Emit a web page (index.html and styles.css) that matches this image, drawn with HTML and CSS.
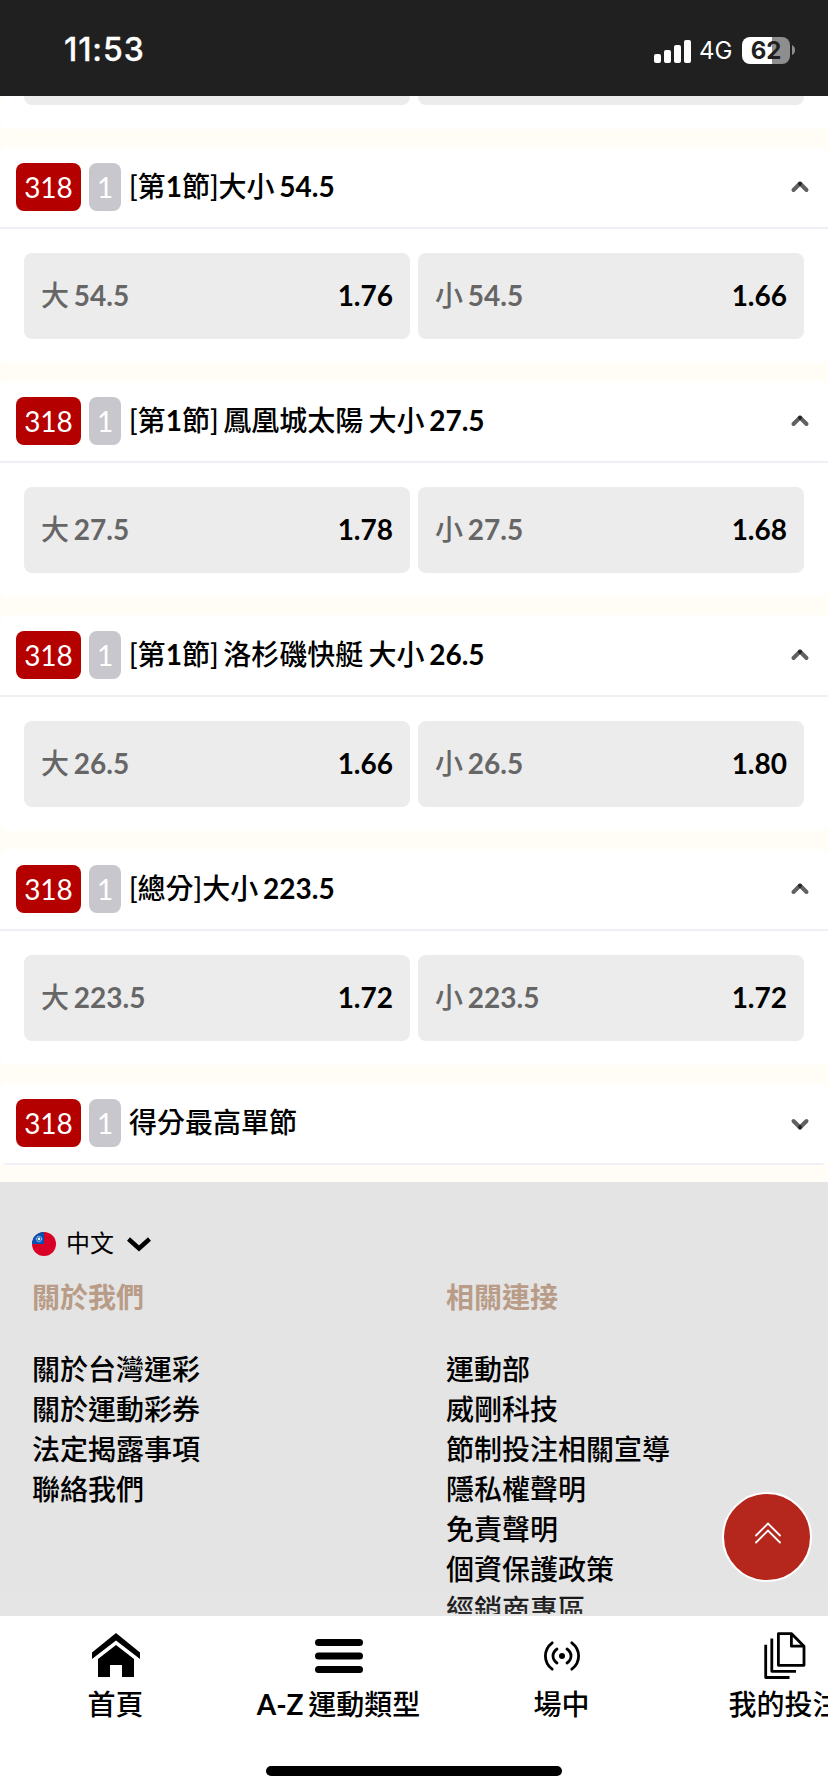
FILE: index.html
```html
<!DOCTYPE html>
<html lang="zh-Hant">
<head>
<meta charset="utf-8">
<title>台灣運彩</title>
<link rel="stylesheet" href="styles.css">
</head>
<body>
<svg class="defs" width="0" height="0">
  <symbol id="chev" viewBox="0 0 20 14">
    <g fill="none" stroke="#000" stroke-opacity=".62" stroke-width="4" stroke-linecap="round">
      <path d="M10 3.500 3.500 10"/><path d="M10 3.500 16.500 10"/>
    </g>
  </symbol>
</svg>
<div class="phone">
  <header class="status">
    <span class="time">11:53</span>
    <div class="status-right">
      <svg class="signal" width="38" height="24" viewBox="0 0 38 24" fill="#fff">
        <rect x="0" y="14" width="7" height="9" rx="2"/><rect x="10" y="10" width="7" height="13" rx="2"/><rect x="20" y="5" width="7" height="18" rx="2"/><rect x="30" y="0" width="7" height="23" rx="2"/>
      </svg>
      <span class="net">4G</span>
      <div class="battery">62</div>
      <svg class="cap" width="3" height="10" viewBox="0 0 3 10"><path d="M0 0Q3 1.500 3 5T0 10Z" fill="#8e8e8e"/></svg>
    </div>
  </header>
  <main class="content">
    <section class="card tail"><div class="options"><div class="option"></div><div class="option"></div></div></section>
    <section class="card">
      <div class="head"><span class="no">318</span><span class="single">1</span><h2>[第<b>1</b>節]大小<b> 54.5</b></h2><svg class="chev"><use href="#chev"/></svg></div>
      <div class="options"><div class="option"><span>大<b> 54.5</b></span><b>1.76</b></div><div class="option"><span>小<b> 54.5</b></span><b>1.66</b></div></div>
    </section>
    <section class="card">
      <div class="head"><span class="no">318</span><span class="single">1</span><h2>[第<b>1</b>節]<b> </b>鳳凰城太陽 大小<b> 27.5</b></h2><svg class="chev"><use href="#chev"/></svg></div>
      <div class="options"><div class="option"><span>大<b> 27.5</b></span><b>1.78</b></div><div class="option"><span>小<b> 27.5</b></span><b>1.68</b></div></div>
    </section>
    <section class="card">
      <div class="head"><span class="no">318</span><span class="single">1</span><h2>[第<b>1</b>節]<b> </b>洛杉磯快艇 大小<b> 26.5</b></h2><svg class="chev"><use href="#chev"/></svg></div>
      <div class="options"><div class="option"><span>大<b> 26.5</b></span><b>1.66</b></div><div class="option"><span>小<b> 26.5</b></span><b>1.80</b></div></div>
    </section>
    <section class="card">
      <div class="head"><span class="no">318</span><span class="single">1</span><h2>[總分]大小<b> 223.5</b></h2><svg class="chev"><use href="#chev"/></svg></div>
      <div class="options"><div class="option"><span>大<b> 223.5</b></span><b>1.72</b></div><div class="option"><span>小<b> 223.5</b></span><b>1.72</b></div></div>
    </section>
    <section class="card last">
      <div class="head"><span class="no">318</span><span class="single">1</span><h2>得分最高單節</h2><svg class="chev down"><use href="#chev"/></svg></div>
    </section>
    <footer class="footer">
      <div class="lang">
        <svg width="24" height="24" viewBox="0 0 24 24"><clipPath id="c"><circle cx="12" cy="12" r="12"/></clipPath><g clip-path="url(#c)"><path fill="#d80027" d="M0 0h24v24H0z"/><path fill="#0052b4" d="M0 0h12v12H0z"/><circle cx="7" cy="7" r="2.700" fill="none" stroke="#e8eefa" stroke-width="1" stroke-dasharray="1.200 .5"/><circle cx="7" cy="7" r="1.400" fill="#f0f0f0"/></g></svg>
        <span>中文</span>
        <svg class="lang-arrow" width="26" height="16" viewBox="0 0 26 16"><path d="M2.500 3 13 12.500 23.500 3" fill="none" stroke="#000" stroke-width="4.400"/></svg>
      </div>
      <div class="cols">
        <div class="col"><h3>關於我們</h3><a>關於台灣運彩</a><a>關於運動彩券</a><a>法定揭露事項</a><a>聯絡我們</a></div>
        <div class="col"><h3>相關連接</h3><a>運動部</a><a>威剛科技</a><a>節制投注相關宣導</a><a>隱私權聲明</a><a>免責聲明</a><a>個資保護政策</a><a>經銷商專區</a></div>
      </div>
    </footer>
    <div class="fade"></div>
  </main>
  <nav class="nav">
    <a class="tab"><svg viewBox="0 0 48 48"><path d="M0 20.500 24 1l24 19.500V27L24 8.500 0 27Z"/><path d="M6 27 24 13l18 14v18H30V33H18v12H6Z"/></svg><span>首頁</span></a>
    <a class="tab"><svg viewBox="0 0 48 48"><rect y="7" width="48" height="7" rx="3.500"/><rect y="20.400" width="48" height="7" rx="3.500"/><rect y="34" width="48" height="7" rx="3.500"/></svg><span><b>A-Z </b>運動類型</span></a>
    <a class="tab"><svg viewBox="0 0 48 48"><circle cx="24" cy="24" r="3"/><g fill="none" stroke="#000" stroke-width="2.800" stroke-linecap="round"><path d="M14.200 10.800Q7.400 16 7.400 24T14.200 37.200"/><path d="M19 17Q15 19.800 15 24T19 31"/><path d="M33.800 10.800Q40.600 16 40.600 24T33.800 37.200"/><path d="M29 17Q33 19.800 33 24T29 31"/></g></svg><span>場中</span></a>
    <a class="tab"><svg viewBox="0 0 48 48"><g fill="none" stroke="#000" stroke-width="2.800" stroke-linejoin="round"><path d="M17.400 1.700H30.600L43 14.200V33.300H17.400Z"/><path d="M30.400 2V14.200H43"/><path d="M10.800 6.500V39.300H35"/><path d="M4.700 12.800V45.500H28.500"/></g></svg><span>我的投注</span></a>
  </nav>
  <button class="totop"><svg width="28" height="24" viewBox="0 0 28 24" fill="none" stroke="#fff" stroke-width="1.800" stroke-linecap="round"><path d="M2 14.500 14 2.500l12 12M2 21.500l12-12 12 12"/></svg></button>
  <div class="home-bar"></div>
</div>
</body>
</html>
```
FILE: styles.css
```css
* { box-sizing: border-box; }
body { margin: 0; font-family: Lato, "Noto Sans CJK TC", sans-serif; color: #000; }
.defs { position: absolute; }
.phone { position: relative; width: 828px; height: 1792px; overflow: hidden; display: flex; flex-direction: column; }

.status { height: 96px; flex: none; background: #202020; color: #fff; display: flex; justify-content: space-between; padding: 0 33px 0 64px; font-family: Inter, sans-serif; }
.time { font-size: 32px; line-height: 38px; font-weight: 500; margin-top: 31px; letter-spacing: .9px; -webkit-text-stroke: .3px #fff; }
.status-right { display: flex; align-items: center; height: 30px; margin-top: 35px; }
.signal { margin-top: 3px; }
.net { font-size: 24px; margin-left: 7px; width: 35px; }
.battery { width: 48px; height: 27px; margin-left: 8px; border-radius: 8px; background: linear-gradient(90deg, #fff 30px, #8e8e8e 30px); color: #202020; font-size: 24px; line-height: 27px; font-weight: 700; text-align: center; }
.cap { margin-left: 2px; }

.content { position: relative; flex: 1; min-height: 0; overflow: hidden; background: #fffdf5; }
.card { background: #fff; border-radius: 8px; margin-bottom: 18px; overflow: hidden; height: 216px; }
.card.tail { height: 33px; display: flex; flex-direction: column; justify-content: flex-end; }
.card.last { height: 82px; margin-bottom: 17px; }
.head { height: 82px; border-bottom: 2px solid #efeff6; padding: 0 18px 0 16px; display: flex; align-items: center; gap: 8px; }
.no, .single { height: 48px; border-radius: 8px; font-size: 28px; line-height: 49px; color: #fff; text-align: center; background: #b50000; width: 65px; }
.single { width: 32px; background: #c8c7cd; }
.head h2 { flex: 1; margin: -2px 0 0; font-size: 28px; line-height: 48px; font-weight: 500; word-spacing: -2px; }
.chev { width: 20px; height: 14px; }
.chev.down { transform: rotate(180deg); margin-top: 2px; }
.options { display: grid; grid-template-columns: 1fr 1fr; gap: 8px; padding: 24px; }
.option { height: 86px; border-radius: 8px; background: #ececec; display: flex; align-items: center; justify-content: space-between; padding: 0 17px; font-size: 28px; line-height: 40px; }
.option > * { margin-top: -2px; }
.option span { color: #666; font-weight: 500; word-spacing: -2px; }
b { font-weight: 700; }

.footer { background: #e4e4e4; height: 600px; padding: 42px 32px 0; }
.lang { display: flex; align-items: center; height: 38px; font-size: 24px; line-height: 38px; padding-top: 2px; }
.lang span { margin: -3px 12px 0 10px; }
.cols { display: grid; grid-template-columns: 414px 1fr; }
.col { display: flex; flex-direction: column; font-size: 28px; line-height: 40px; font-weight: 500; }
.col h3 { margin: 15px 0 32px; font-size: 28px; line-height: 40px; font-weight: 600; color: #b99c87; }
.fade { position: absolute; left: 0; right: 0; bottom: 0; height: 36px; border-bottom: 2px solid #e6e6e6; background: linear-gradient(rgba(235,235,235,0), rgba(235,235,235,.2)); }

.nav { height: 176px; flex: none; background: #fff; display: grid; grid-template-columns: repeat(4, 223px); padding: 16px 0 0 4px; }
.tab { display: flex; flex-direction: column; align-items: center; font-size: 28px; line-height: 48px; font-weight: 500; white-space: nowrap; word-spacing: -2px; }
.tab svg { width: 48px; height: 48px; }
.totop { position: absolute; left: 722px; top: 1492px; width: 90px; height: 90px; border-radius: 50%; border: 2px solid #fff; background: #b5271c; padding: 0; display: flex; align-items: center; justify-content: center; }
.totop svg { margin: -8px 0 0 2px; }
.home-bar { position: absolute; left: 266px; top: 1766px; width: 296px; height: 10px; border-radius: 5px; background: #000; }
```
